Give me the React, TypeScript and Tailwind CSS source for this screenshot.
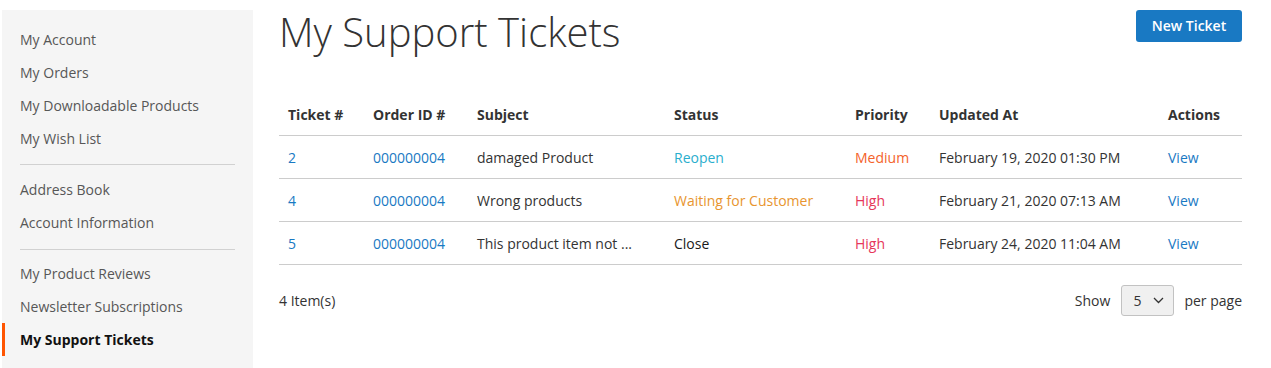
import React from "react";

const rows = [
  { id: "2", order: "000000004", subject: "damaged Product", status: "Reopen", statusCls: "text-[#2aaecd]", priority: "Medium", priCls: "text-[#f4622a]", date: "February 19, 2020 01:30 PM" },
  { id: "4", order: "000000004", subject: "Wrong products", status: "Waiting for Customer", statusCls: "text-[#e8952f]", priority: "High", priCls: "text-[#e6365a]", date: "February 21, 2020 07:13 AM" },
  { id: "5", order: "000000004", subject: "This product item not ...", status: "Close", statusCls: "text-[#1a1a1a]", priority: "High", priCls: "text-[#e6365a]", date: "February 24, 2020 11:04 AM" },
];

const grid = "grid grid-cols-[85px_104px_197px_181px_84px_229px_1fr]";

function NavItem({ label, active }: { label: string; active?: boolean }) {
  return (
    <div
      className={
        "h-[33px] flex items-center pl-[15px] border-l-[3px] " +
        (active ? "border-[#ff5501] font-bold text-[#111]" : "border-transparent text-[#575757]")
      }
    >
      {label}
    </div>
  );
}

export default function App() {
  return (
    <div
      className="flex bg-white text-[14px] text-[#333] min-h-[368px]"
      style={{ fontFamily: '"Open Sans", "Liberation Sans", sans-serif' }}
    >
      <aside className="ml-[2px] mt-[10px] w-[251px] shrink-0 bg-[#f5f5f5] pt-[13px] pb-[14px]">
        <NavItem label="My Account" />
        <NavItem label="My Orders" />
        <NavItem label="My Downloadable Products" />
        <NavItem label="My Wish List" />
        <div className="mt-[9px] mb-[8px] mx-[18px] h-px bg-[#d1d1d1]" />
        <NavItem label="Address Book" />
        <NavItem label="Account Information" />
        <div className="mt-[10px] mb-[7px] mx-[18px] h-px bg-[#d1d1d1]" />
        <NavItem label="My Product Reviews" />
        <NavItem label="Newsletter Subscriptions" />
        <NavItem label="My Support Tickets" active />
      </aside>

      <main className="ml-[26px] mr-[29px] mt-[10px] flex-1">
        <div className="flex items-start justify-between">
          <h1 className="text-[40px] font-light leading-[44px] text-[#333]">My Support Tickets</h1>
          <button className="h-[32px] w-[106px] rounded-[3px] bg-[#1979c3] text-white text-[14px] font-semibold leading-[30px]">
            New Ticket
          </button>
        </div>

        <div className="mt-[40px]">
          <div className={grid + " border-b border-[#cccccc] h-[42px] items-center font-bold"}>
            {["Ticket #", "Order ID #", "Subject", "Status", "Priority", "Updated At", "Actions"].map((h) => (
              <div key={h} className="pl-[9px]">{h}</div>
            ))}
          </div>
          {rows.map((r) => (
            <div key={r.id} className={grid + " border-b border-[#cccccc] h-[43px] items-center"}>
              <div className="pl-[9px] text-[#1979c3]">{r.id}</div>
              <div className="pl-[9px] text-[#1979c3]">{r.order}</div>
              <div className="pl-[9px]">{r.subject}</div>
              <div className={"pl-[9px] " + r.statusCls}>{r.status}</div>
              <div className={"pl-[9px] " + r.priCls}>{r.priority}</div>
              <div className="pl-[9px]">{r.date}</div>
              <div className="pl-[9px] text-[#1979c3]">View</div>
            </div>
          ))}
        </div>

        <div className="mt-[20px] flex items-center justify-between">
          <div>4 Item(s)</div>
          <div className="flex items-center">
            <span>Show</span>
            <div className="ml-[11px] mr-[10px] h-[31px] w-[53px] rounded-[3px] border border-[#c2c2c2] bg-[#f0f0f0] flex items-center justify-between pl-[11px] pr-[9px]">
              <span className="text-[#333]">5</span>
              <svg width="11" height="7" viewBox="0 0 11 7" fill="none">
                <path d="M1 1l4.5 4.5L10 1" stroke="#333" strokeWidth="1.3" />
              </svg>
            </div>
            <span>per page</span>
          </div>
        </div>
      </main>
    </div>
  );
}
